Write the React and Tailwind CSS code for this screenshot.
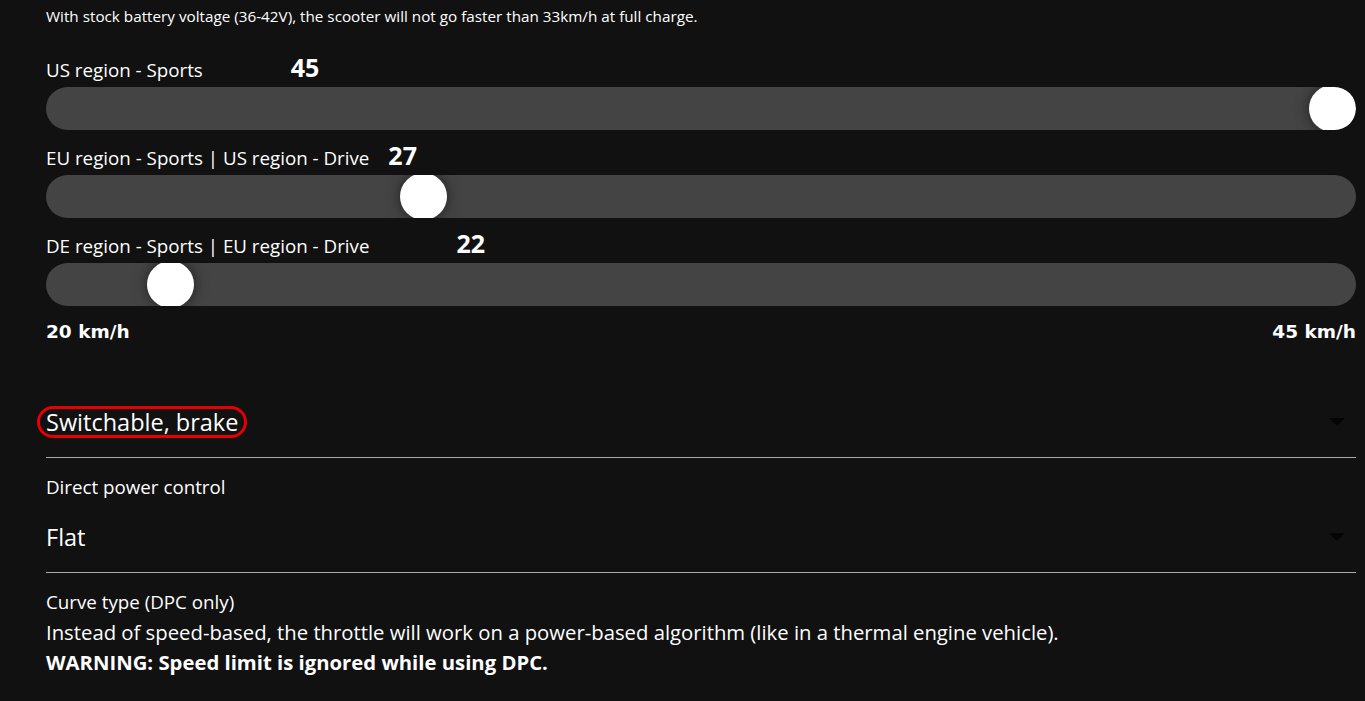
import React from 'react'

const sliders = [
  { label: 'US region - Sports', value: 45, gap: 'ml-[88px]' },
  { label: 'EU region - Sports | US region - Drive', value: 27, gap: 'ml-[19px]' },
  { label: 'DE region - Sports | EU region - Drive', value: 22, gap: 'ml-[87px]' },
]

const MIN = 20
const MAX = 45

function SpeedSlider({ label, value, gap }) {
  const pct = (value - MIN) / (MAX - MIN)
  return (
    <div>
      <div className="flex items-baseline h-[32px] leading-[25px]">
        <span className="text-[18.75px]">{label}</span>
        <span className={'text-[25px] font-bold ' + gap}>{value}</span>
      </div>
      <div className="relative h-[43px] rounded-full bg-[#444444] overflow-hidden">
        <div
          className="absolute top-[-2px] w-[47px] h-[47px] rounded-full bg-white shadow-[0_0_14px_rgba(0,0,0,0.55)]"
          style={{ left: `calc((100% - 47px) * ${pct})` }}
        />
      </div>
    </div>
  )
}

function Select({ children, annotate }) {
  return (
    <div className="relative border-b border-[#aaaaaa] pb-[19px]">
      <div className="h-[32px] leading-[26px] text-[23.5px] flex items-center">
        {annotate ? (
          <span className="inline-block -ml-[9px] px-[6px] border-[3px] border-[#e60000] rounded-full">{children}</span>
        ) : (
          <span>{children}</span>
        )}
      </div>
      <div className="absolute right-[11px] top-[12px] w-0 h-0 border-x-[8px] border-x-transparent border-t-[8px] border-t-[#050505]" />
    </div>
  )
}

export default function App() {
  return (
    <div className="min-h-[701px] bg-[#111111] text-white pl-[46px] pr-[9px] pt-[6px] font-['Open_Sans',sans-serif]">
      <p className="text-[15.25px] leading-[20px]">
        With stock battery voltage (36-42V), the scooter will not go faster than 33km/h at full charge.
      </p>

      <div className="mt-[29px] flex flex-col gap-[13px]">
        {sliders.map(s => (
          <SpeedSlider key={s.label} {...s} />
        ))}
      </div>

      <div className="mt-[14px] flex justify-between h-[24px] leading-[24px] text-[18.5px] font-bold font-['DejaVu_Sans',sans-serif]">
        <span>20 km/h</span>
        <span>45 km/h</span>
      </div>

      <div className="mt-[62px]">
        <Select annotate>Switchable, brake</Select>
      </div>

      <p className="mt-[16px] text-[18.75px] leading-[26px]">Direct power control</p>

      <div className="mt-[21px]">
        <Select>Flat</Select>
      </div>

      <div className="mt-[14px] leading-[30px]">
        <p className="text-[18.75px]">Curve type (DPC only)</p>
        <p className="text-[20.3px]">Instead of speed-based, the throttle will work on a power-based algorithm (like in a thermal engine vehicle).</p>
        <p className="text-[20.3px] font-bold">WARNING: Speed limit is ignored while using DPC.</p>
      </div>
    </div>
  )
}
